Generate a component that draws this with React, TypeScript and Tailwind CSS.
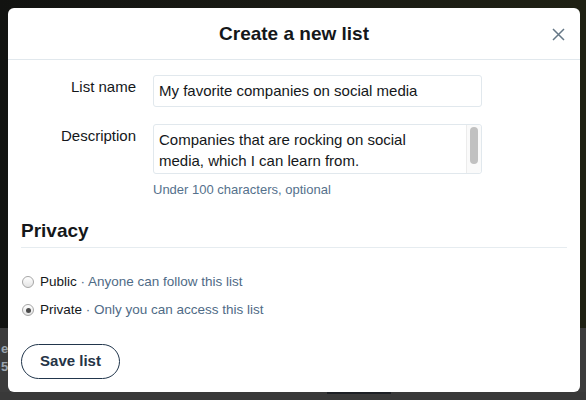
import * as React from "react"

function Radio({ checked }: { checked?: boolean }) {
  return (
    <span className="w-[12px] h-[12px] rounded-full border border-[#a6a6a6] bg-gradient-to-b from-[#ffffff] to-[#e4e4e4] flex items-center justify-center shrink-0">
      {checked && <span className="w-[5px] h-[5px] rounded-full bg-[#4a4a4a]" />}
    </span>
  )
}

export default function App() {
  return (
    <div className="relative w-[586px] h-[400px] overflow-hidden font-['Liberation_Sans','Helvetica_Neue',Arial,sans-serif]">
      {/* page behind the overlay */}
      <div className="flex flex-col h-full">
        <div className="h-[328px] bg-gradient-to-r from-[#121311] via-[#1a1b14] to-[#1f2114]" />
        <div className="h-[64px] bg-[#3c3c3c] flex flex-col pt-[12px] pl-[1px] text-[13px] font-bold leading-[18px] text-[#9aa4ae]">
          <span>e</span>
          <span>5</span>
        </div>
        <div className="h-[8px] bg-[#393939] flex">
          <div className="ml-[327px] w-[64px] h-[2px] bg-[#1c1f24]" />
        </div>
      </div>

      {/* modal */}
      <div className="absolute left-[8px] top-[8px] w-[572px] h-[384px] bg-white rounded-[6px] flex flex-col">
        <div className="relative h-[52px] border-b border-[#e1e8ed] flex items-center justify-center">
          <h2 className="text-[19px] font-bold leading-[24px] text-[#14171a]">Create a new list</h2>
          <button className="absolute right-[15px] top-[19px] w-[14px] h-[14px] flex items-center justify-center">
            <svg width="13" height="13" viewBox="0 0 13 13" fill="none">
              <path d="M1 1 L12 12 M12 1 L1 12" stroke="#657786" strokeWidth="1.5" />
            </svg>
          </button>
        </div>

        <div className="pt-[15px] flex flex-col">
          {/* list name */}
          <div className="flex items-start gap-[17px]">
            <label className="w-[128px] text-right text-[15px] leading-[20px] pt-[2px] text-[#14171a]">List name</label>
            <div className="w-[329px] h-[32px] border border-[#e1e8ed] rounded-[3px] px-[5px] py-[5px] text-[15px] leading-[20px] text-[#14171a]">
              My favorite companies on social media
            </div>
          </div>

          {/* description */}
          <div className="flex items-start gap-[17px] mt-[17px]">
            <label className="w-[128px] text-right text-[15px] leading-[20px] pt-[2px] text-[#14171a]">Description</label>
            <div className="flex flex-col">
              <div className="w-[329px] h-[50px] border border-[#e1e8ed] rounded-[3px] flex">
                <div className="flex-1 pl-[5px] pt-[4px] text-[15px] leading-[21px] text-[#14171a]">
                  <div>Companies that are rocking on social</div>
                  <div>media, which I can learn from.</div>
                </div>
                <div className="w-[15px] border-l border-[#ececec] bg-[#fafafa] rounded-r-[3px] flex justify-center pt-[2px]">
                  <div className="w-[8px] h-[37px] rounded-full bg-[#c1c1c1]" />
                </div>
              </div>
              <p className="mt-[7px] text-[13px] leading-[18px] text-[#55718c]">Under 100 characters, optional</p>
            </div>
          </div>

          {/* privacy */}
          <div className="px-[13px] mt-[20px]">
            <h3 className="text-[19px] font-bold leading-[24px] text-[#14171a] pb-[4px] border-b border-[#e6ecf0]">Privacy</h3>
            <div className="mt-[24px] flex flex-col gap-[8px] text-[13.5px] leading-[20px]">
              <label className="flex items-center gap-[6px] pl-[1px]">
                <Radio />
                <span className="text-[#14171a]">
                  Public <span className="text-[#4f6b86]">· Anyone can follow this list</span>
                </span>
              </label>
              <label className="flex items-center gap-[6px] pl-[1px]">
                <Radio checked />
                <span className="text-[#14171a]">
                  Private <span className="text-[#4f6b86]">· Only you can access this list</span>
                </span>
              </label>
            </div>
            <button className="mt-[24px] w-[99px] h-[35px] rounded-full border border-[#22364c] text-[15px] font-bold text-[#253446]">
              Save list
            </button>
          </div>
        </div>
      </div>
    </div>
  )
}
